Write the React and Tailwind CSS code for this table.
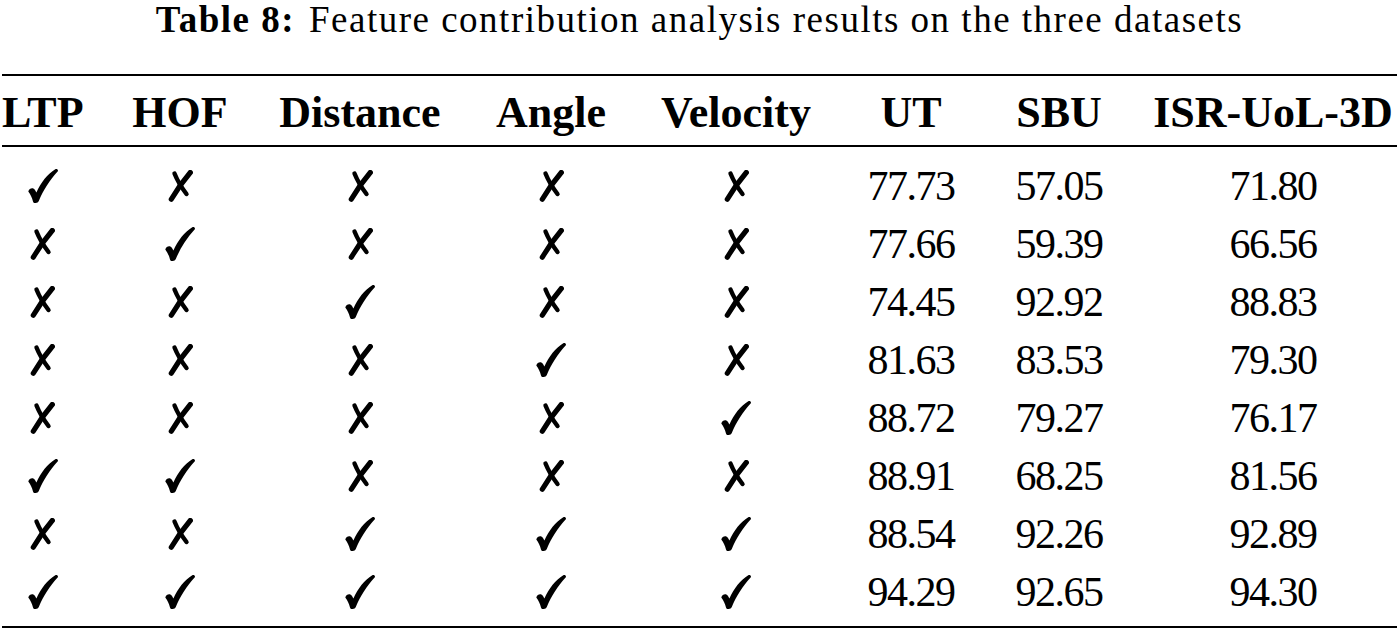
const HEADERS = ["LTP", "HOF", "Distance", "Angle", "Velocity", "UT", "SBU", "ISR-UoL-3D"];

// 1 = check, 0 = cross
const ROWS = [
  { marks: [1, 0, 0, 0, 0], scores: ["77.73", "57.05", "71.80"] },
  { marks: [0, 1, 0, 0, 0], scores: ["77.66", "59.39", "66.56"] },
  { marks: [0, 0, 1, 0, 0], scores: ["74.45", "92.92", "88.83"] },
  { marks: [0, 0, 0, 1, 0], scores: ["81.63", "83.53", "79.30"] },
  { marks: [0, 0, 0, 0, 1], scores: ["88.72", "79.27", "76.17"] },
  { marks: [1, 1, 0, 0, 0], scores: ["88.91", "68.25", "81.56"] },
  { marks: [0, 0, 1, 1, 1], scores: ["88.54", "92.26", "92.89"] },
  { marks: [1, 1, 1, 1, 1], scores: ["94.29", "92.65", "94.30"] },
];

const GRID = "grid grid-cols-[81px_194px_166px_216px_154px_196px_100px_1fr]";

function Check() {
  return (
    <svg width="30" height="34" viewBox="0 0 30 34" aria-hidden="true">
      <path
        d="M0.3 22.5 C1.3 19.2 5.2 18.2 7 21 L8.4 23.4 C13 13.5 19.5 5 27.3 0.3 C29 -0.5 30.8 1.2 29.6 2.6 C21.8 11 15.2 21.4 10.8 32 C9.8 34.4 5.6 34.8 5 32.4 C4.1 28.6 2.5 25.6 0.3 22.5 Z"
        fill="black"
      />
    </svg>
  );
}

function Cross() {
  return (
    <svg width="25" height="32" viewBox="0 0 25 32" aria-hidden="true">
      <path d="M6.5 3.5 Q10.5 13.5 18.5 24" stroke="black" strokeWidth="4.4" strokeLinecap="round" fill="none" />
      <path d="M22.3 2.5 Q12 14.5 3.3 29.2" stroke="black" strokeWidth="5.2" strokeLinecap="round" fill="none" />
    </svg>
  );
}

function Cell({ children, last }) {
  return (
    <div className={`flex h-[58px] items-center justify-center ${last ? "pl-[40px]" : ""}`}>{children}</div>
  );
}

export default function App() {
  return (
    <div className="h-[632px] w-[1399px] overflow-hidden bg-white font-['Liberation_Serif',serif] text-black">
      <p className="h-[40px] text-center text-[37px] leading-[40px] tracking-[1.5px]">
        <span className="font-bold">Table 8:</span>
        <span className="ml-[14px]">Feature contribution analysis results on the three datasets</span>
      </p>

      <div className="mx-[2px] mt-[34px] border-y-[2px] border-black">
        <div className={`${GRID} h-[71px] border-b-[2px] border-black pt-[2px] text-[44px] font-bold leading-[69px]`}>
          {HEADERS.map((h, i) => (
            <div key={h} className={`text-center whitespace-nowrap ${i === 7 ? "pl-[40px]" : ""}`}>
              {h}
            </div>
          ))}
        </div>

        <div className="pb-[5px] pt-[10px]">
          {ROWS.map((row, r) => (
            <div key={r} className={`${GRID} text-[42px] leading-[58px] tracking-[-1.5px]`}>
              {row.marks.map((m, i) => (
                <Cell key={i}>{m ? <Check /> : <Cross />}</Cell>
              ))}
              {row.scores.map((s, i) => (
                <Cell key={`s${i}`} last={i === 2}>
                  {s}
                </Cell>
              ))}
            </div>
          ))}
        </div>
      </div>
    </div>
  );
}
